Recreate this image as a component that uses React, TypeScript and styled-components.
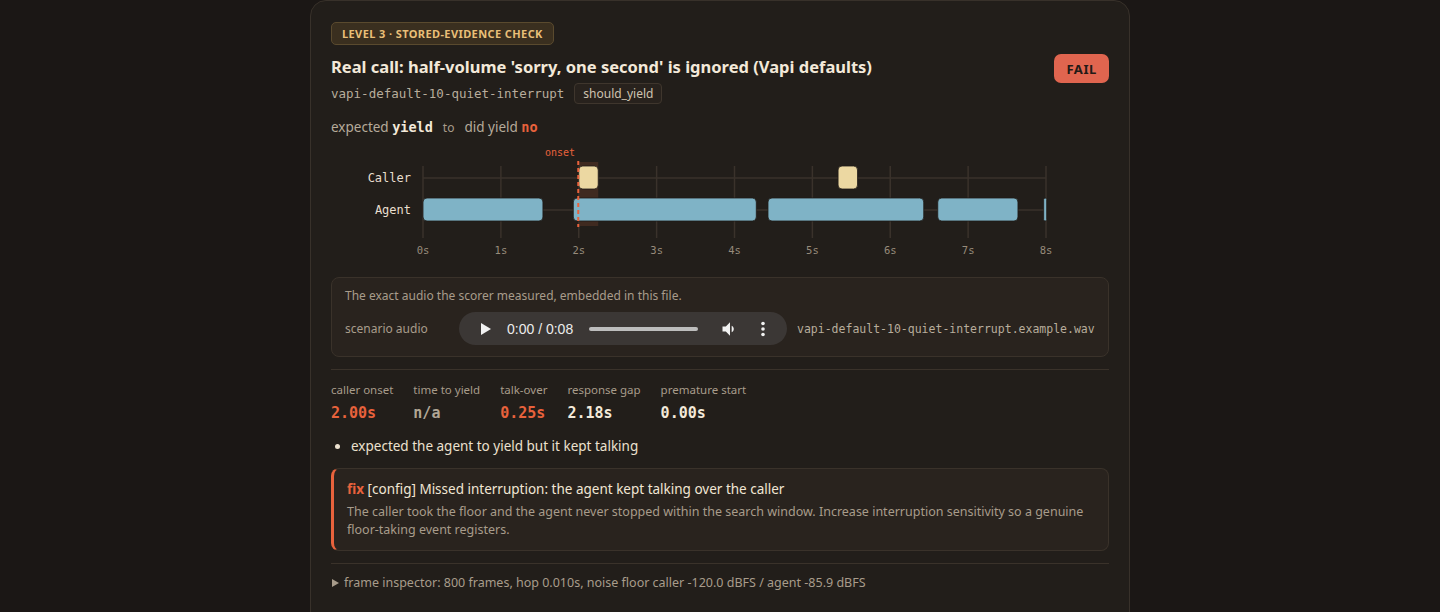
import React from 'react';
import styled, { createGlobalStyle } from 'styled-components';

const GlobalStyle = createGlobalStyle`
  html, body {
    margin: 0;
    padding: 0;
    background: #1b1715;
    color: #f1e6d4;
    font-family: "Noto Sans", "Open Sans", sans-serif;
  }
`;

const MONO = `"DejaVu Sans Mono", "Liberation Mono", monospace`;
const ORANGE = '#e8623c';
const MUTED = '#a89c8b';

const Card = styled.section`
  width: 820px;
  box-sizing: border-box;
  margin: 0 auto;
  padding: 20px 20px 24px;
  background: #221e1a;
  border: 1px solid #38312a;
  border-radius: 16px;
  min-height: 640px;
`;

const LevelBadge = styled.div`
  display: inline-block;
  padding: 4px 10px;
  font-size: 11px;
  line-height: 13px;
  font-weight: 700;
  letter-spacing: 0.4px;
  color: #e9bf78;
  background: #3a2f1f;
  border: 1px solid #5a4a2e;
  border-radius: 5px;
`;

const HeadRow = styled.div`
  display: flex;
  align-items: flex-start;
  justify-content: space-between;
  margin-top: 9px;
`;

const Title = styled.h2`
  margin: 0;
  font-size: 16.5px;
  line-height: 26px;
  font-weight: 700;
  color: #f3e9d9;
`;

const FailBadge = styled.span`
  padding: 0 12px;
  height: 29px;
  display: flex;
  align-items: center;
  border-radius: 7px;
  background: #e0654f;
  color: #221a16;
  font-weight: 700;
  font-size: 13px;
  letter-spacing: 0.6px;
`;

const SlugRow = styled.div`
  display: flex;
  align-items: center;
  gap: 10px;
  margin-top: 3px;
`;

const Slug = styled.span`
  font-family: ${MONO};
  font-size: 12.5px;
  color: #b8ad9c;
`;

const Tag = styled.span`
  font-size: 12px;
  line-height: 17px;
  padding: 1px 8px;
  color: #cfc3b0;
  background: #28221d;
  border: 1px solid #3f362d;
  border-radius: 4px;
`;

const Expect = styled.div`
  margin-top: 13px;
  font-size: 13.5px;
  line-height: 20px;
  color: #b6ab9a;
`;

const Strong = styled.b<{ $tone?: 'bad' }>`
  font-family: ${MONO};
  font-weight: 700;
  color: ${(p) => (p.$tone === 'bad' ? ORANGE : '#f3e9d9')};
`;

const Arrow = styled.span`
  font-size: 12px;
  margin: 0 10px;
  color: ${MUTED};
`;

const Chart = styled.svg`
  display: block;
  margin-top: 5px;
`;

const AudioBox = styled.div`
  margin-top: 12px;
  padding: 9px 13px 11px;
  background: #29231e;
  border: 1px solid #3a322a;
  border-radius: 8px;
`;

const Note = styled.div`
  font-size: 12px;
  line-height: 18px;
  color: ${MUTED};
`;

const AudioRow = styled.div`
  display: flex;
  align-items: center;
  gap: 10px;
  margin-top: 7px;
`;

const AudioLabel = styled.span`
  width: 104px;
  flex-shrink: 0;
  font-size: 12px;
  color: ${MUTED};
`;

const Player = styled.div`
  width: 328px;
  height: 33px;
  flex-shrink: 0;
  box-sizing: border-box;
  border-radius: 17px;
  background: #3b3735;
  display: flex;
  align-items: center;
  padding: 0 20px 0 21px;
  color: #ececec;
`;

const Time = styled.span`
  font-family: "Liberation Sans", Arial, sans-serif;
  font-size: 14px;
  margin-left: 15px;
  white-space: nowrap;
`;

const Track = styled.div`
  width: 109px;
  height: 4px;
  border-radius: 2px;
  background: #bdbdbd;
  margin-left: 16px;
  margin-right: 22px;
`;

const FileName = styled.span`
  font-family: ${MONO};
  font-size: 11.5px;
  white-space: nowrap;
  color: #b8ad9c;
`;

const Rule = styled.hr`
  border: 0;
  border-top: 1px solid #3a322a;
  margin: 12px 0 0;
`;

const Metrics = styled.div`
  display: flex;
  gap: 20px;
  padding-top: 11px;
`;

const Metric = styled.div`
  display: flex;
  flex-direction: column;
  gap: 3px;
`;

const MetricLabel = styled.span`
  font-size: 11.5px;
  line-height: 18px;
  color: ${MUTED};
`;

const MetricValue = styled.span<{ $tone: 'bad' | 'dim' | 'ok' }>`
  font-family: ${MONO};
  font-weight: 700;
  font-size: 15px;
  line-height: 22px;
  color: ${(p) => (p.$tone === 'bad' ? ORANGE : p.$tone === 'dim' ? '#b1a695' : '#f3e9d9')};
`;

const Findings = styled.ul`
  margin: 11px 0 0;
  padding-left: 20px;
  font-size: 13.5px;
  line-height: 22px;
  color: #ece1cf;
`;

const FixBox = styled.div`
  margin-top: 11px;
  padding: 10px 14px 11px 13px;
  background: #29231e;
  border: 1px solid #3a322a;
  border-left: 3px solid ${ORANGE};
  border-radius: 8px;
`;

const FixTitle = styled.div`
  font-size: 13.5px;
  line-height: 20px;
  color: #f1e6d4;
  b {
    color: ${ORANGE};
    font-weight: 700;
  }
`;

const FixText = styled.div`
  margin-top: 4px;
  font-size: 12.5px;
  line-height: 18px;
  color: ${MUTED};
`;

const Footer = styled.div`
  margin-top: 12px;
  padding-top: 9px;
  border-top: 1px solid #3a322a;
  display: flex;
  align-items: center;
  gap: 5px;
  font-size: 12.5px;
  line-height: 20px;
  color: ${MUTED};
`;

const Caret = styled.span`
  width: 0;
  height: 0;
  margin-left: 1px;
  border-left: 7px solid #a89c8b;
  border-top: 4px solid transparent;
  border-bottom: 4px solid transparent;
`;

const X0 = 92;
const PX = 77.875;
const x = (t: number) => X0 + t * PX;

const callerSegs: [number, number][] = [
  [2.0, 2.25],
  [5.33, 5.58],
];
const agentSegs: [number, number][] = [
  [0, 1.54],
  [1.93, 4.28],
  [4.43, 6.43],
  [6.61, 7.64],
  [7.97, 8.0],
];

function Timeline() {
  const ticks = [0, 1, 2, 3, 4, 5, 6, 7, 8];
  return (
    <Chart width={778} height={122} viewBox="0 0 778 122">
      {ticks.map((t) => (
        <line key={t} x1={x(t)} x2={x(t)} y1={23} y2={95} stroke="#3a322b" strokeWidth={1.5} />
      ))}
      <line x1={X0} x2={x(8)} y1={35} y2={35} stroke="#3a322b" strokeWidth={1.5} />
      <line x1={X0} x2={x(8)} y1={67} y2={67} stroke="#3a322b" strokeWidth={1.5} />
      <rect x={x(2)} y={19} width={x(2.25) - x(2)} height={64} fill="#3f2a20" />
      {callerSegs.map(([a, b]) => (
        <rect key={a} x={x(a)} y={23} width={x(b) - x(a)} height={23} rx={4} fill="#ecd8a2" stroke="#1f1a16" strokeWidth={0.8} />
      ))}
      {agentSegs.map(([a, b]) => (
        <rect key={a} x={x(a)} y={55} width={Math.max(x(b) - x(a), 3)} height={23} rx={b - a < 0.1 ? 1.5 : 4} fill="#7fb3c6" stroke="#1f1a16" strokeWidth={0.8} />
      ))}
      <line x1={x(2) - 0.5} x2={x(2) - 0.5} y1={18} y2={84} stroke={ORANGE} strokeWidth={2} strokeDasharray="4 3" />
      <text x={229} y={13} textAnchor="middle" fontFamily={MONO} fontSize={10} fill={ORANGE}>onset</text>
      <text x={80} y={35} textAnchor="end" dominantBaseline="middle" fontFamily={MONO} fontSize={12} fill="#e9dfcf">Caller</text>
      <text x={80} y={67} textAnchor="end" dominantBaseline="middle" fontFamily={MONO} fontSize={12} fill="#e9dfcf">Agent</text>
      {ticks.map((t) => (
        <text key={t} x={x(t)} y={108} textAnchor="middle" dominantBaseline="middle" fontFamily={MONO} fontSize={10.5} fill="#978b7b">{t}s</text>
      ))}
    </Chart>
  );
}

function PlayIcon() {
  return (
    <svg width="12" height="14" viewBox="0 0 12 14">
      <path d="M1 1 L11 7 L1 13 Z" fill="#f2f2f2" />
    </svg>
  );
}

function VolumeIcon() {
  return (
    <svg width="20" height="20" viewBox="0 0 24 24">
      <path d="M3 9v6h4l5 5V4L7 9H3z" fill="#f2f2f2" />
      <path d="M16.5 12c0-1.77-1.02-3.29-2.5-4.03v8.05c1.48-.73 2.5-2.25 2.5-4.02z" fill="#f2f2f2" />
    </svg>
  );
}

function MoreIcon() {
  return (
    <svg width="4" height="16" viewBox="0 0 4 16" style={{ marginLeft: 21 }}>
      <circle cx="2" cy="2.5" r="1.8" fill="#f2f2f2" />
      <circle cx="2" cy="8" r="1.8" fill="#f2f2f2" />
      <circle cx="2" cy="13.5" r="1.8" fill="#f2f2f2" />
    </svg>
  );
}

const metrics: { label: string; value: string; tone: 'bad' | 'dim' | 'ok' }[] = [
  { label: 'caller onset', value: '2.00s', tone: 'bad' },
  { label: 'time to yield', value: 'n/a', tone: 'dim' },
  { label: 'talk-over', value: '0.25s', tone: 'bad' },
  { label: 'response gap', value: '2.18s', tone: 'ok' },
  { label: 'premature start', value: '0.00s', tone: 'ok' },
];

export default function App() {
  return (
    <>
      <GlobalStyle />
      <Card>
        <LevelBadge>LEVEL 3 · STORED-EVIDENCE CHECK</LevelBadge>
        <HeadRow>
          <div>
            <Title>Real call: half-volume 'sorry, one second' is ignored (Vapi defaults)</Title>
            <SlugRow>
              <Slug>vapi-default-10-quiet-interrupt</Slug>
              <Tag>should_yield</Tag>
            </SlugRow>
          </div>
          <FailBadge>FAIL</FailBadge>
        </HeadRow>
        <Expect>
          expected <Strong>yield</Strong>
          <Arrow>to</Arrow>
          did yield <Strong $tone="bad">no</Strong>
        </Expect>

        <Timeline />

        <AudioBox>
          <Note>The exact audio the scorer measured, embedded in this file.</Note>
          <AudioRow>
            <AudioLabel>scenario audio</AudioLabel>
            <Player>
              <PlayIcon />
              <Time>0:00 / 0:08</Time>
              <Track />
              <VolumeIcon />
              <MoreIcon />
            </Player>
            <FileName>vapi-default-10-quiet-interrupt.example.wav</FileName>
          </AudioRow>
        </AudioBox>

        <Rule />
        <Metrics>
          {metrics.map((m) => (
            <Metric key={m.label}>
              <MetricLabel>{m.label}</MetricLabel>
              <MetricValue $tone={m.tone}>{m.value}</MetricValue>
            </Metric>
          ))}
        </Metrics>

        <Findings>
          <li>expected the agent to yield but it kept talking</li>
        </Findings>

        <FixBox>
          <FixTitle>
            <b>fix</b> [config] Missed interruption: the agent kept talking over the caller
          </FixTitle>
          <FixText>
            The caller took the floor and the agent never stopped within the search window. Increase interruption sensitivity so a genuine floor-taking event registers.
          </FixText>
        </FixBox>

        <Footer>
          <Caret />
          frame inspector: 800 frames, hop 0.010s, noise floor caller -120.0 dBFS / agent -85.9 dBFS
        </Footer>
      </Card>
    </>
  );
}
